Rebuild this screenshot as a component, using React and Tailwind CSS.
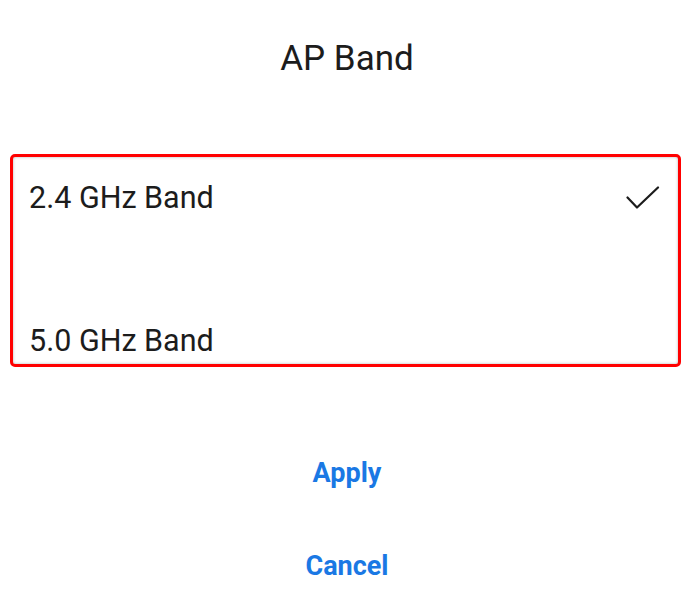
const CheckIcon = () => (
  <svg
    xmlns="http://www.w3.org/2000/svg"
    width="34"
    height="24"
    viewBox="0 0 34 24"
    fill="none"
    stroke="#1c1c1c"
    strokeWidth={2.2}
    strokeLinecap="round"
    strokeLinejoin="round"
  >
    <polyline points="1.5,11.5 11,21.5 32,1.5" />
  </svg>
);

const bands = [
  { label: "2.4 GHz Band", selected: true },
  { label: "5.0 GHz Band", selected: false },
];

export default function App() {
  return (
    <div className="w-[699px] h-[600px] bg-white overflow-hidden font-['Roboto',sans-serif]">
      <div className="w-[694px] flex flex-col items-center">
        {/* Title */}
        <h1 className="mt-[39px] h-[40px] leading-[40px] text-[35px] font-normal text-[#1c1c1c]">
          AP Band
        </h1>

        {/* Options, marked with the red frame */}
        <div className="mt-[75px] ml-[10px] self-start w-[671px] h-[213px] border-[3px] border-[#ff0000] rounded-[5px] shadow-[inset_0_0_3px_rgba(0,0,0,0.3)] flex flex-col gap-[107px] pt-[23px] pl-[16px] pr-[18px]">
          {bands.map((band) => (
            <div key={band.label} className="flex items-center justify-between h-[36px]">
              <span className="text-[30.5px] leading-[36px] text-[#1c1c1c]">{band.label}</span>
              {band.selected && <CheckIcon />}
            </div>
          ))}
        </div>

        {/* Actions */}
        <button className="mt-[90px] h-[32px] leading-[32px] text-[27px] font-bold text-[#1a78e4]">
          Apply
        </button>
        <button className="mt-[61px] h-[32px] leading-[32px] text-[27px] font-bold text-[#1a78e4]">
          Cancel
        </button>
      </div>
    </div>
  );
}
